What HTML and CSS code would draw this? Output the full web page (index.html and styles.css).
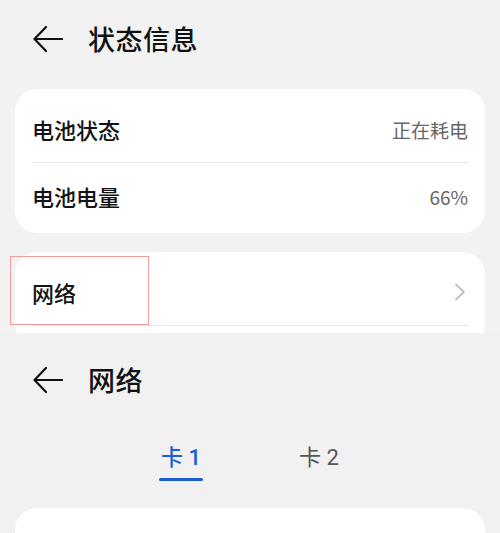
FILE: index.html
```html
<!DOCTYPE html>
<html lang="zh-CN">
<head>
<meta charset="utf-8">
<title>状态信息</title>
<link rel="stylesheet" href="styles.css">
</head>
<body>
<div class="screen screen-top">
  <header class="appbar appbar-top">
    <svg class="back" width="30" height="28" viewBox="0 0 30 28"><path d="M29 14H2M13 2L1.5 14L13 26" fill="none" stroke="#111" stroke-width="2.2" stroke-linecap="round" stroke-linejoin="round"/></svg>
    <h1 class="title">状态信息</h1>
  </header>
  <section class="card">
    <div class="row">
      <span class="label">电池状态</span>
      <span class="value">正在耗电</span>
    </div>
    <div class="sep"></div>
    <div class="row">
      <span class="label">电池电量</span>
      <span class="value">66%</span>
    </div>
  </section>
  <section class="card card-net">
    <div class="row">
      <span class="label">网络</span>
      <svg class="chev" width="12" height="18" viewBox="0 0 12 18"><path d="M2 1.5L10 9L2 16.5" fill="none" stroke="#bdbdbd" stroke-width="1.8" stroke-linecap="round" stroke-linejoin="round"/></svg>
    </div>
    <div class="sep"></div>
  </section>
  <div class="highlight"></div>
</div>
<div class="screen screen-bottom">
  <header class="appbar appbar-bottom">
    <svg class="back" width="30" height="28" viewBox="0 0 30 28"><path d="M29 14H2M13 2L1.5 14L13 26" fill="none" stroke="#111" stroke-width="2.2" stroke-linecap="round" stroke-linejoin="round"/></svg>
    <h1 class="title">网络</h1>
  </header>
  <nav class="tabs">
    <div class="tab active"><span class="tab-text">卡 1</span><span class="bar"></span></div>
    <div class="tab"><span class="tab-text">卡 2</span><span class="bar"></span></div>
  </nav>
  <section class="card card-bottom"></section>
</div>
</body>
</html>
```
FILE: styles.css
```css
html, body {
  margin: 0;
  padding: 0;
  background: #f1f1f1;
  font-family: "Noto Sans CJK SC", "Noto Sans", sans-serif;
  color: #161616;
}
.screen {
  width: 500px;
  overflow: hidden;
}
.screen-top {
  height: 333px;
  position: relative;
  background: #f2f2f2;
}
.screen-bottom {
  height: 200px;
  background: #f1f1f1;
}
.appbar {
  display: flex;
  align-items: center;
  padding-left: 33px;
}
.appbar-top {
  height: 78px;
  margin-bottom: 11px;
}
.appbar-bottom {
  height: 94px;
}
.back {
  display: block;
  flex: none;
}
.title {
  margin: 0 0 0 25px;
  font-size: 27px;
  font-weight: 500;
  line-height: 34px;
  color: #111;
  letter-spacing: 0.5px;
}
.card {
  margin: 0 15px;
  background: #fff;
  border-radius: 22px;
  padding: 7px 0 4px;
}
.card-net {
  margin-top: 19px;
  padding-bottom: 20px;
}
.row {
  height: 66px;
  display: flex;
  align-items: center;
  justify-content: space-between;
  padding: 0 17px 0 17px;
}
.label {
  font-size: 22px;
  font-weight: 500;
  color: #141414;
}
.value {
  font-size: 19px;
  color: #666;
}
.sep {
  height: 1px;
  background: #e4e4e4;
  margin: 0 17px;
}
.chev {
  display: block;
  margin-right: 2px;
}
.highlight {
  position: absolute;
  left: 10px;
  top: 256px;
  width: 137px;
  height: 67px;
  border: 1px solid #ef9c9c;
}
.tabs {
  display: flex;
  justify-content: center;
  padding-top: 16px;
}
.tab {
  width: 138px;
  display: flex;
  flex-direction: column;
  align-items: center;
}
.tab-text {
  font-size: 22px;
  line-height: 30px;
  font-weight: 400;
  color: #555;
  font-family: Roboto, "Noto Sans CJK SC", sans-serif;
}
.bar {
  display: block;
  width: 44px;
  height: 3px;
  border-radius: 2px;
  margin-top: 5px;
  background: transparent;
}
.tab.active .tab-text {
  color: #1d5fd3;
  font-weight: 500;
}
.tab.active .bar {
  background: #1d5fd3;
}
.card-bottom {
  margin-top: 27px;
  height: 60px;
  padding: 0;
}
```
